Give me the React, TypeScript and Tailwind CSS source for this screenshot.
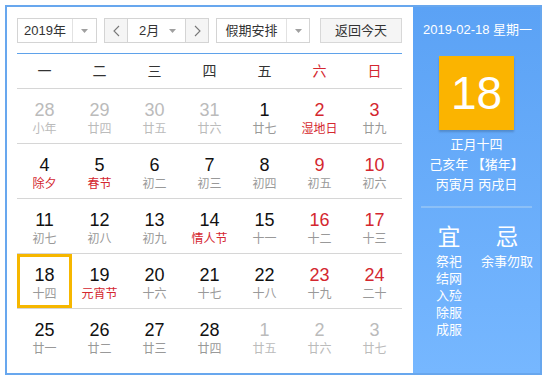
import React from 'react';

type Cell = {
  d: number;
  l: string;
  other?: boolean;
  red?: boolean;
  fest?: boolean;
  sel?: boolean;
};

const weeks: Cell[][] = [
  [
    { d: 28, l: '小年', other: true },
    { d: 29, l: '廿四', other: true },
    { d: 30, l: '廿五', other: true },
    { d: 31, l: '廿六', other: true },
    { d: 1, l: '廿七' },
    { d: 2, l: '湿地日', red: true, fest: true },
    { d: 3, l: '廿九', red: true },
  ],
  [
    { d: 4, l: '除夕', fest: true },
    { d: 5, l: '春节', fest: true },
    { d: 6, l: '初二' },
    { d: 7, l: '初三' },
    { d: 8, l: '初四' },
    { d: 9, l: '初五', red: true },
    { d: 10, l: '初六', red: true },
  ],
  [
    { d: 11, l: '初七' },
    { d: 12, l: '初八' },
    { d: 13, l: '初九' },
    { d: 14, l: '情人节', fest: true },
    { d: 15, l: '十一' },
    { d: 16, l: '十二', red: true },
    { d: 17, l: '十三', red: true },
  ],
  [
    { d: 18, l: '十四', sel: true },
    { d: 19, l: '元宵节', fest: true },
    { d: 20, l: '十六' },
    { d: 21, l: '十七' },
    { d: 22, l: '十八' },
    { d: 23, l: '十九', red: true },
    { d: 24, l: '二十', red: true },
  ],
  [
    { d: 25, l: '廿一' },
    { d: 26, l: '廿二' },
    { d: 27, l: '廿三' },
    { d: 28, l: '廿四' },
    { d: 1, l: '廿五', other: true },
    { d: 2, l: '廿六', other: true },
    { d: 3, l: '廿七', other: true },
  ],
];

const weekdays = ['一', '二', '三', '四', '五', '六', '日'];

const Caret = () => (
  <svg width="7" height="4" viewBox="0 0 7 4">
    <polygon points="0,0 7,0 3.5,4" fill="#a0a0a0" />
  </svg>
);

const Chevron = ({ dir }: { dir: 'l' | 'r' }) => (
  <svg width="7" height="12" viewBox="0 0 7 12">
    <polyline
      points={dir === 'l' ? '6,1 1,6 6,11' : '1,1 6,6 1,11'}
      fill="none"
      stroke="#777"
      strokeWidth="1.1"
    />
  </svg>
);

const DayCell = ({ c }: { c: Cell }) => {
  const numColor = c.other ? 'text-[#bbbbbb]' : c.red ? 'text-[#d4272f]' : 'text-[#111111]';
  const lunarColor = c.other
    ? 'text-[#bbbbbb]'
    : c.fest
    ? 'text-[#d4272f]'
    : 'text-[#999999]';
  return (
    <div
      className={
        'w-[55px] h-full flex flex-col items-center ' +
        (c.sel ? 'border-[3px] border-[#f6b700] pt-[8px]' : 'pt-[11px]')
      }
    >
      <span className={'text-[18px] leading-[20px] ' + numColor}>{c.d}</span>
      <span className={'mt-[2px] text-[12px] leading-[14px] ' + lunarColor}>{c.l}</span>
    </div>
  );
};

export default function App() {
  return (
    <div
      className="w-[547px] h-[381px] bg-white pt-[5px] pl-[5px]"
      style={{ fontFamily: '"Liberation Sans", "Noto Sans CJK SC", sans-serif' }}
    >
      <div className="w-[537px] h-[370px] border-2 border-[#68a7ee] flex bg-white">
        {/* left: month grid */}
        <div className="w-[406px] pl-[10px] pt-[11px]">
          <div className="h-[25px] flex text-[13px] text-[#333333]">
            <div className="w-[80px] h-full flex border border-[#d4d4d4]">
              <div className="flex-1 flex items-center justify-center">2019年</div>
              <div className="w-[24px] flex items-center justify-center border-l border-[#e2e2e2]">
                <Caret />
              </div>
            </div>
            <div className="ml-[7px] w-[105px] h-full flex border border-[#d4d4d4]">
              <div className="w-[23px] flex items-center justify-center bg-[#f5f5f5] border-r border-[#d4d4d4]">
                <Chevron dir="l" />
              </div>
              <div className="flex-1 flex items-center pl-[11px]">2月</div>
              <div className="w-[16px] flex items-center">
                <Caret />
              </div>
              <div className="w-[23px] flex items-center justify-center bg-[#f5f5f5] border-l border-[#d4d4d4]">
                <Chevron dir="r" />
              </div>
            </div>
            <div className="ml-[7px] w-[94px] h-full flex border border-[#d4d4d4]">
              <div className="flex-1 flex items-center justify-center">假期安排</div>
              <div className="w-[23px] flex items-center justify-center border-l border-[#e2e2e2]">
                <Caret />
              </div>
            </div>
            <div className="ml-[10px] w-[82px] h-full flex items-center justify-center border border-[#d8d8d8] bg-[#f5f5f5]">
              返回今天
            </div>
          </div>

          <div className="mt-[10px] w-[385px] border-t border-[#5fa2ea]">
            <div className="h-[35px] flex items-center border-b border-[#d6d6d6]">
              {weekdays.map((w, i) => (
                <div
                  key={w}
                  className={
                    'w-[55px] text-center text-[14px] ' +
                    (i >= 5 ? 'text-[#d4272f]' : 'text-[#333333]')
                  }
                >
                  {w}
                </div>
              ))}
            </div>
            {weeks.map((row, ri) => (
              <div
                key={ri}
                className={
                  'h-[55px] flex ' + (ri < weeks.length - 1 ? 'border-b border-[#d6d6d6]' : '')
                }
              >
                {row.map((c, ci) => (
                  <DayCell key={ci} c={c} />
                ))}
              </div>
            ))}
          </div>
        </div>

        {/* right: today detail */}
        <div className="flex-1 flex flex-col items-center text-white bg-gradient-to-b from-[#5ba2f5] to-[#76b7ff]">
          <div className="mt-[15px] ml-[2px] text-[13px] leading-[16px]">2019-02-18 星期一</div>
          <div className="mt-[18px] w-[75px] h-[74px] bg-[#fbb400] flex items-center justify-center text-[46px] shadow-[0_2px_2px_rgba(0,0,0,0.18)]">
            18
          </div>
          <div className="mt-[5px] flex flex-col items-center text-[13px] leading-[20px]">
            <span>正月十四</span>
            <span>己亥年 【猪年】</span>
            <span>丙寅月 丙戌日</span>
          </div>
          <div className="mt-[11px] w-[111px] h-[2px] bg-[#8cc0f7]" />
          <div className="mt-[16px] ml-[3px] flex">
            <div className="w-[58px] flex flex-col items-center">
              <span className="text-[23px] leading-[26px]">宜</span>
              <div className="mt-[3px] flex flex-col text-[13px] leading-[17px]">
                <span>祭祀</span>
                <span>结网</span>
                <span>入殓</span>
                <span>除服</span>
                <span>成服</span>
              </div>
            </div>
            <div className="w-[58px] flex flex-col items-center">
              <span className="text-[23px] leading-[26px]">忌</span>
              <div className="mt-[3px] text-[13px] leading-[17px]">余事勿取</div>
            </div>
          </div>
        </div>
      </div>
    </div>
  );
}
